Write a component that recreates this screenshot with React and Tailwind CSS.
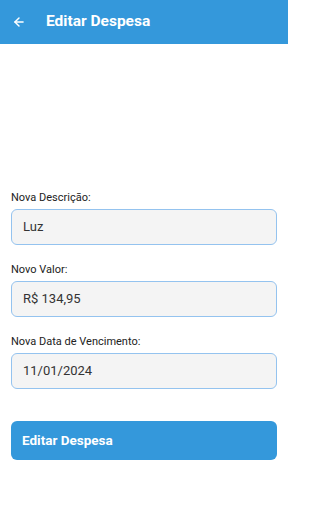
import { ArrowLeft } from "lucide-react";

const fields = [
  { label: "Nova Descrição:", value: "Luz" },
  { label: "Novo Valor:", value: "R$ 134,95" },
  { label: "Nova Data de Vencimento:", value: "11/01/2024" },
];

const Field = ({ label, value }) => (
  <div className="flex flex-col">
    <label className="text-[11px] leading-[14px] text-[#222]">{label}</label>
    <div className="mt-1 h-9 rounded-md border border-[#94c3ef] bg-[#f4f4f4] px-[11px] flex items-center text-[13px] text-[#333]">
      {value}
    </div>
  </div>
);

export default function App() {
  return (
    <div
      className="w-[288px] h-[512px] bg-white flex flex-col"
      style={{ fontFamily: "Roboto, 'Liberation Sans', sans-serif" }}
    >
      <header className="h-11 bg-[#3498db] flex items-center pl-3">
        <ArrowLeft size={14} strokeWidth={2.5} className="text-white" />
        <h1 className="ml-[20px] text-[15.5px] font-bold text-white">Editar Despesa</h1>
      </header>

      <main className="pl-[11px] pr-[11px] pt-[147px] flex flex-col gap-[18px]">
        {fields.map((f) => (
          <Field key={f.label} label={f.label} value={f.value} />
        ))}
        <button className="mt-[14px] h-[39px] rounded-md bg-[#3498db] text-white text-left px-[11px] text-[13.5px] font-bold">
          Editar Despesa
        </button>
      </main>
    </div>
  );
}
